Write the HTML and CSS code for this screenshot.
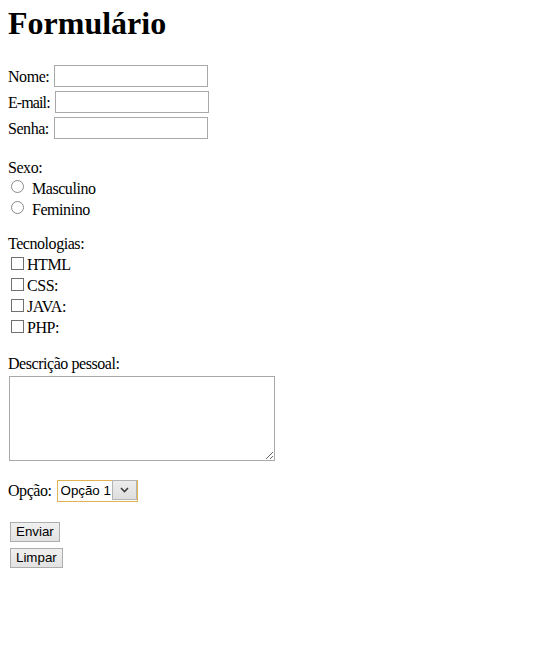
FILE: index.html
```html
<!DOCTYPE html>
<html lang="pt-BR">
<head>
<meta charset="utf-8">
<title>Formulário</title>
<link rel="stylesheet" href="styles.css">
</head>
<body>
<main class="page">
  <h1 class="title">Formulário</h1>
  <form class="form">
    <div class="fields">
      <label class="field"><span class="label">Nome:</span><input class="text-input" type="text"></label>
      <label class="field"><span class="label label-email">E-mail:</span><input class="text-input" type="email"></label>
      <label class="field"><span class="label">Senha:</span><input class="text-input" type="password"></label>
    </div>

    <fieldset class="group group-sexo">
      <div class="line">Sexo:</div>
      <div class="options">
        <label class="option"><input class="radio" type="radio" name="sexo"><span class="text">Masculino</span></label>
        <label class="option"><input class="radio" type="radio" name="sexo"><span class="text">Feminino</span></label>
      </div>
    </fieldset>

    <fieldset class="group group-tec">
      <div class="line">Tecnologias:</div>
      <div class="checks">
        <label class="check"><input class="checkbox" type="checkbox"><span class="text">HTML</span></label>
        <label class="check"><input class="checkbox" type="checkbox"><span class="text">CSS:</span></label>
        <label class="check"><input class="checkbox" type="checkbox"><span class="text">JAVA:</span></label>
        <label class="check"><input class="checkbox" type="checkbox"><span class="text">PHP:</span></label>
      </div>
    </fieldset>

    <div class="group group-desc">
      <div class="line">Descrição pessoal:</div>
      <textarea class="textarea"></textarea>
    </div>

    <label class="field field-select">
      <span class="label">Opção:</span>
      <span class="select-wrap">
        <select class="select">
          <option>Opção 1</option>
          <option>Opção 2</option>
        </select>
        <span class="select-btn">
          <svg width="9" height="6" viewBox="0 0 9 6" aria-hidden="true"><path d="M1 1 L4.5 4.5 L8 1" fill="none" stroke="#3c3c3c" stroke-width="1.6"/></svg>
        </span>
      </span>
    </label>

    <div class="actions">
      <button class="btn" type="submit">Enviar</button>
      <button class="btn" type="reset">Limpar</button>
    </div>
  </form>
</main>
</body>
</html>
```

FILE: styles.css
```css
html, body {
  margin: 0;
  padding: 0;
  background: #ffffff;
}

body {
  font-family: "Liberation Serif", "Times New Roman", serif;
  font-size: 16px;
  color: #000000;
}

.page {
  padding: 0 8px;
  display: flow-root;
}

.title {
  margin: 5px 0 0 0;
  font-size: 32px;
  font-weight: bold;
  line-height: 37px;
}

.form {
  margin: 0;
  letter-spacing: -0.45px;
}

.fields {
  margin-top: 23px;
  display: flex;
  flex-direction: column;
  gap: 4px;
}

.field {
  display: flex;
  align-items: center;
  gap: 5px;
  height: 22px;
  line-height: 21px;
}

.label-email {
  letter-spacing: -0.9px;
}

.text-input {
  box-sizing: border-box;
  width: 154px;
  height: 22px;
  margin: 0;
  padding: 1px 3px;
  border: 1px solid #a9a9a9;
  border-radius: 0;
  background: #fff;
  font: 13px "Liberation Sans", Arial, sans-serif;
  outline: none;
}

.group {
  margin: 0;
  padding: 0;
  border: 0;
  min-width: 0;
}

.line {
  line-height: 21px;
  height: 21px;
}

.group-sexo {
  margin-top: 18px;
}

.options {
  display: flex;
  flex-direction: column;
}

.option {
  display: flex;
  align-items: flex-start;
  height: 21px;
  line-height: 21px;
}

.radio {
  appearance: none;
  -webkit-appearance: none;
  box-sizing: border-box;
  width: 13px;
  height: 13px;
  margin: 2px 8px 0 3px;
  border: 1px solid #8a8a8a;
  border-radius: 50%;
  background: #fff;
  flex: none;
}

.group-tec {
  margin-top: 13px;
}

.checks {
  display: flex;
  flex-direction: column;
}

.check {
  display: flex;
  align-items: flex-start;
  height: 21px;
  line-height: 21px;
}

.checkbox {
  appearance: none;
  -webkit-appearance: none;
  box-sizing: border-box;
  width: 13px;
  height: 13px;
  margin: 3px 3px 0 3px;
  border: 1px solid #707070;
  border-radius: 0;
  background: #fff;
  flex: none;
}

.group-desc {
  margin-top: 15px;
}

.textarea {
  display: block;
  box-sizing: border-box;
  width: 266px;
  height: 85px;
  margin: 2px 0 0 1px;
  padding: 2px;
  border: 1px solid #a9a9a9;
  border-radius: 0;
  background: #fff;
  font: 13px "Liberation Mono", monospace;
  outline: none;
}

.field-select {
  margin-top: 18px;
  width: max-content;
}

.select-wrap {
  position: relative;
  display: inline-block;
  width: 81px;
  height: 22px;
}

.select {
  appearance: none;
  -webkit-appearance: none;
  box-sizing: border-box;
  width: 81px;
  height: 22px;
  margin: 0;
  padding: 0 0 0 3px;
  border: 1px solid #e0b354;
  border-radius: 0;
  background: #fff;
  color: #000;
  font: 13.33px "Liberation Sans", Arial, sans-serif;
  letter-spacing: 0;
  outline: none;
}

.select-btn {
  position: absolute;
  top: 1px;
  right: 1px;
  bottom: 1px;
  width: 25px;
  box-sizing: border-box;
  border: 1px solid #b3b3b3;
  background: linear-gradient(#ececec, #dedede);
  display: flex;
  align-items: center;
  justify-content: center;
  pointer-events: none;
}

.actions {
  margin-top: 21px;
  display: flex;
  flex-direction: column;
  align-items: flex-start;
  gap: 6px;
  padding-left: 2px;
}

.btn {
  box-sizing: border-box;
  height: 20px;
  margin: 0;
  padding: 0 5px;
  border: 1px solid #adadad;
  border-radius: 0;
  background: linear-gradient(#f0f0f0, #e2e2e2);
  color: #000;
  font: 13.33px "Liberation Sans", Arial, sans-serif;
  letter-spacing: 0;
  line-height: 18px;
}
```
